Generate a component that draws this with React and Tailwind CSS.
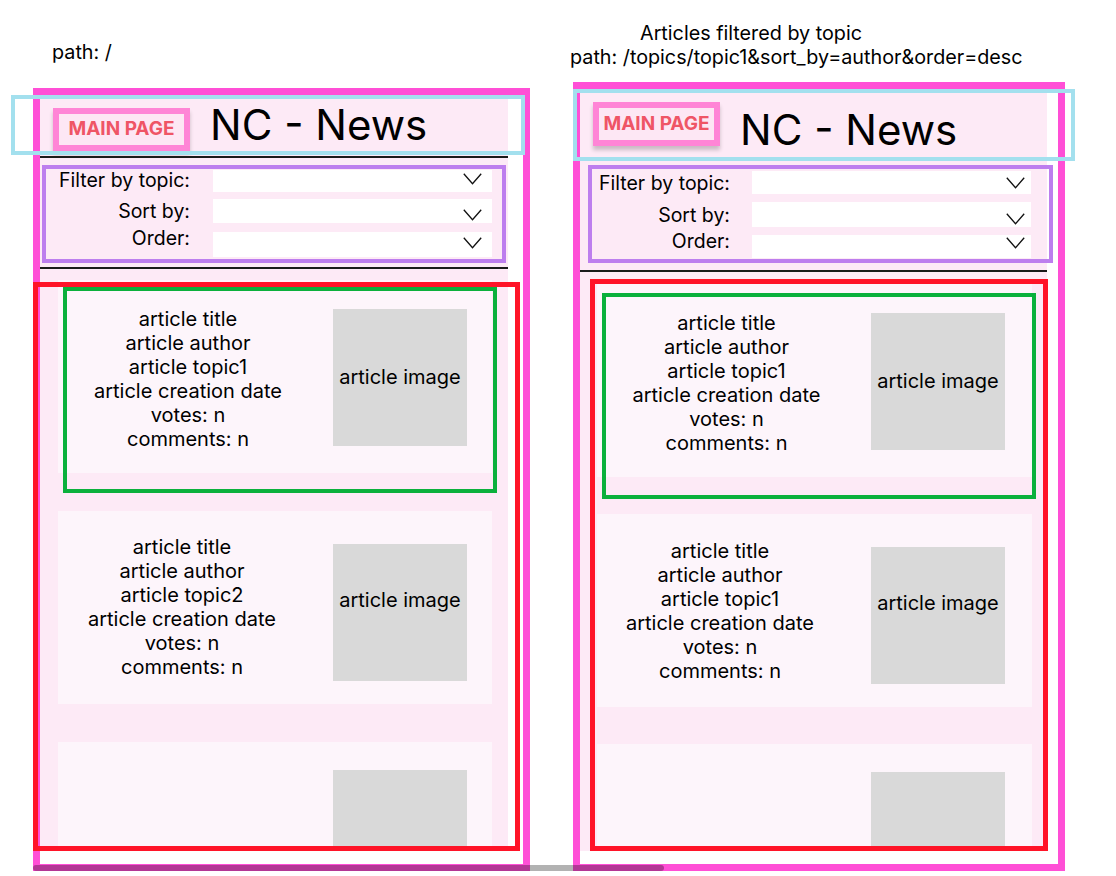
import React from 'react';

const FONT = "font-['Inter','Noto_Sans',sans-serif]";

const Chevron = ({ className }) => (
    <svg viewBox="0 0 19 12" className={className} fill="none" stroke="#111" strokeWidth="1.3">
        <path d="M0.8 0.8 L9.5 10.8 L18.2 0.8" />
    </svg>
);

const ArticleCard = ({ card }) => (
    <div className="flex items-start w-full h-[193px] bg-[#fdf5fb] shrink-0">
        <div className={`${card.textW} ${card.textMt} text-center text-[20px] leading-[24px] text-black`}>
            {card.lines.map((line) => (
                <div key={line}>{line}</div>
            ))}
        </div>
        <div
            className={`${card.imgMl} ${card.imgMt} ${card.imgPad} w-[134px] h-[137px] shrink-0 bg-[#d9d9d9] flex items-center justify-center text-[20px] text-black`}
        >
            {card.imgLabel}
        </div>
    </div>
);

const Frame = ({ cfg }) => (
    <div className={`absolute ${cfg.frame} border-[7px] border-[#ff4fd6] bg-white`}>
        {/* page column */}
        <div className={`${cfg.column} bg-[#fdeaf6] flex flex-col`}>
            {/* Header */}
            <div className={`flex items-start shrink-0 ${cfg.header}`}>
                <div
                    className={`${cfg.button} border-[6px] border-[#ff85d6] bg-[#fde7f4] flex items-center justify-center shadow-[0_4px_4px_rgba(0,0,0,0.2)]`}
                >
                    <span className="text-[19px] font-bold text-[#ef5566]">MAIN PAGE</span>
                </div>
                <h1 className={`${cfg.title} text-[42px] leading-[51px] font-normal text-black whitespace-nowrap`}>
                    NC - News
                </h1>
            </div>
            <div className="h-[2px] shrink-0 bg-[#1a1a1a]" />

            {/* Filters */}
            <div className={`${cfg.filters} shrink-0 border-[4px] border-[#bd7eee] flex flex-col`}>
                {cfg.rows.map((row) => (
                    <div key={row.label} className={`flex items-start ${row.row}`}>
                        <div className={`${cfg.labelW} ${row.labelMt} shrink-0 text-right text-[19.5px] leading-[24px] text-black whitespace-nowrap`}>
                            {row.label}
                        </div>
                        <div className={`${cfg.boxMl} w-[279px] h-full bg-white flex justify-end items-start`}>
                            <Chevron className={`w-[19px] h-[12px] ${row.chevMt} ${cfg.chevMr}`} />
                        </div>
                    </div>
                ))}
            </div>
            <div className={`${cfg.line2} h-[1.5px] shrink-0 bg-[#1a1a1a]`} />

            {/* Article list */}
            <div className={`flex flex-col flex-1 min-h-0 overflow-hidden ${cfg.list}`}>
                {cfg.cards.map((card, i) => (
                    <ArticleCard key={i} card={card} />
                ))}
            </div>
        </div>

        {/* Annotation outlines */}
        <div className={`absolute ${cfg.cyan} border-[4px] border-[#a3e0ee] pointer-events-none`} />
        <div className={`absolute ${cfg.red} border-[5px] border-[#ff1428] pointer-events-none`} />
        <div className={`absolute ${cfg.green} border-[4px] border-[#0bb03c] pointer-events-none`} />
    </div>
);

const lines = (topic) => [
    'article title',
    'article author',
    `article ${topic}`,
    'article creation date',
    'votes: n',
    'comments: n',
];

const leftFrame = {
    frame: 'left-[33px] top-[88px] w-[497px] h-[783px]',
    column: 'w-[468px] h-[756px]',
    header: 'h-[61px] pl-[13px]',
    button: 'mt-[13px] w-[137px] h-[43px]',
    title: 'ml-[20px] mt-[4px]',
    filters: 'mt-[7px] ml-[2px] w-[464px] h-[98px]',
    labelW: 'w-[144px]',
    boxMl: 'ml-[23px]',
    chevMr: 'mr-[10px]',
    rows: [
        { label: 'Filter by topic:', row: 'mt-[1px] h-[22px]', labelMt: '-mt-[2px]', chevMt: 'mt-[3px]' },
        { label: 'Sort by:', row: 'mt-[7px] h-[24px]', labelMt: 'mt-0', chevMt: 'mt-[10px]' },
        { label: 'Order:', row: 'mt-[9px] h-[25px]', labelMt: '-mt-[6px]', chevMt: 'mt-[5px]' },
    ],
    line2: 'mt-[4px]',
    list: 'pt-[11px] pl-[18px] w-[452px] gap-[38px]',
    cards: [
        { textW: 'w-[260px]', textMt: 'mt-[27px]', imgMl: 'ml-[15px]', imgMt: 'mt-[29px]', imgPad: 'pb-0', lines: lines('topic1'), imgLabel: 'article image' },
        { textW: 'w-[248px]', textMt: 'mt-[24px]', imgMl: 'ml-[27px]', imgMt: 'mt-[33px]', imgPad: 'pb-[24px]', lines: lines('topic2'), imgLabel: 'article image' },
        { textW: 'w-[260px]', textMt: 'mt-[24px]', imgMl: 'ml-[15px]', imgMt: 'mt-[28px]', imgPad: 'pb-0', lines: [], imgLabel: '' },
    ],
    cyan: '-left-[29px] top-0 w-[514px] h-[60px]',
    red: '-left-[7px] top-[187px] w-[487px] h-[569px]',
    green: 'left-[23px] top-[192px] w-[434px] h-[206px]',
};

const rightFrame = {
    frame: 'left-[573px] top-[82px] w-[492px] h-[789px]',
    column: 'w-[467px] h-[762px]',
    header: 'h-[69px] pl-[13px]',
    button: 'mt-[13px] w-[127px] h-[44px]',
    title: 'ml-[20px] mt-[15px]',
    filters: 'mt-[5px] ml-[8px] w-[465px] h-[98px]',
    labelW: 'w-[138px]',
    boxMl: 'ml-[22px]',
    chevMr: 'mr-[6px]',
    rows: [
        { label: 'Filter by topic:', row: 'mt-[2px] h-[23px]', labelMt: 'mt-0', chevMt: 'mt-[6px]' },
        { label: 'Sort by:', row: 'mt-[8px] h-[25px]', labelMt: 'mt-[1px]', chevMt: 'mt-[11px]' },
        { label: 'Order:', row: 'mt-[8px] h-[23px]', labelMt: '-mt-[6px]', chevMt: 'mt-[2px]' },
    ],
    line2: 'mt-[7px]',
    list: 'pt-[12px] pl-[17px] w-[452px] gap-[37px]',
    cards: [
        { textW: 'w-[259px]', textMt: 'mt-[27px]', imgMl: 'ml-[15px]', imgMt: 'mt-[29px]', imgPad: 'pb-0', lines: lines('topic1'), imgLabel: 'article image' },
        { textW: 'w-[246px]', textMt: 'mt-[25px]', imgMl: 'ml-[28px]', imgMt: 'mt-[33px]', imgPad: 'pb-[24px]', lines: lines('topic1'), imgLabel: 'article image' },
        { textW: 'w-[259px]', textMt: 'mt-[24px]', imgMl: 'ml-[15px]', imgMt: 'mt-[28px]', imgPad: 'pb-0', lines: [], imgLabel: '' },
    ],
    cyan: '-left-[7px] top-0 w-[502px] h-[72px]',
    red: 'left-[10px] top-[190px] w-[458px] h-[572px]',
    green: 'left-[22px] top-[204px] w-[434px] h-[206px]',
};

export default function App() {
    return (
        <div className={`relative w-[1116px] h-[876px] overflow-hidden bg-white text-black ${FONT}`}>
            {/* Canvas labels */}
            <div className="absolute left-[52px] top-[40px] text-[19.75px] leading-[24px]">path: /</div>
            <div className="absolute left-[570px] top-[21px] text-[19.75px] leading-[24px] whitespace-nowrap">
                <div className="pl-[70px]">Articles filtered by topic</div>
                <div>path: /topics/topic1&amp;sort_by=author&amp;order=desc</div>
            </div>

            <Frame cfg={leftFrame} />
            <Frame cfg={rightFrame} />

            {/* canvas scrollbar */}
            <div className="absolute left-[33px] top-[865px] w-[631px] h-[6px] rounded-full bg-black/30" />
        </div>
    );
}
